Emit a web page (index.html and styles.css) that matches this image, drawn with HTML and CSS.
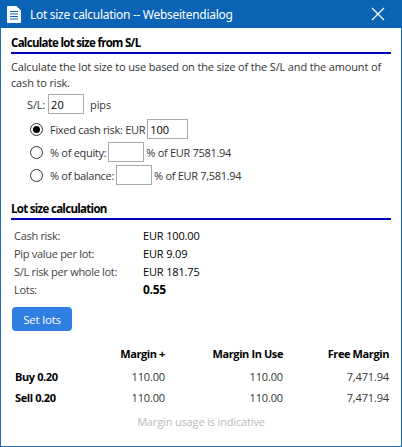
FILE: index.html
```html
<!DOCTYPE html>
<html lang="en">
<head>
  <meta charset="UTF-8">
  <title>Lot size calculation</title>
  <link rel="stylesheet" href="styles.css">
</head>
<body>
  <div class="window">
    <div class="titlebar">
      <svg class="doc-icon" width="14" height="17" viewBox="0 0 14 17">
        <path d="M0.5 0.5 H9.5 L13.5 4.5 V16.5 H0.5 Z" fill="#fff" stroke="#fff"/>
        <path d="M3 5.5 H11 M3 8 H11 M3 10.5 H11 M3 13 H11" stroke="#0b63b6" stroke-width="1"/>
      </svg>
      <span class="title">Lot size calculation -- Webseitendialog</span>
      <svg class="close" width="14" height="14" viewBox="0 0 14 14">
        <path d="M1 1 L13 13 M13 1 L1 13" stroke="#fff" stroke-width="1.2"/>
      </svg>
    </div>

    <div class="content">
      <!-- Calculate from S/L -->
      <h3 class="section-title">Calculate lot size from S/L</h3>
      <p class="intro">Calculate the lot size to use based on the size of the S/L and the amount of cash to risk.</p>

      <div class="sl-row">
        <span>S/L:</span>
        <input type="text" class="sl-input" value="20">
        <span class="pips">pips</span>
      </div>

      <div class="options">
        <label class="option">
          <span class="radio checked"></span>
          <span>Fixed cash risk: EUR</span>
          <input type="text" class="cash-input" value="100">
        </label>
        <label class="option">
          <span class="radio"></span>
          <span>% of equity:</span>
          <input type="text" class="pct-input">
          <span>% of EUR 7581.94</span>
        </label>
        <label class="option">
          <span class="radio"></span>
          <span>% of balance:</span>
          <input type="text" class="pct-input">
          <span>% of EUR 7,581.94</span>
        </label>
      </div>

      <!-- Results -->
      <h3 class="section-title second">Lot size calculation</h3>
      <div class="results">
        <span class="label">Cash risk:</span><span>EUR 100.00</span>
        <span class="label">Pip value per lot:</span><span>EUR 9.09</span>
        <span class="label">S/L risk per whole lot:</span><span>EUR 181.75</span>
        <span class="label">Lots:</span><span class="lots">0.55</span>
      </div>

      <button class="set-lots">Set lots</button>

      <table class="margin-table">
        <tr>
          <th></th>
          <th>Margin +</th>
          <th>Margin In Use</th>
          <th>Free Margin</th>
        </tr>
        <tr>
          <td class="side">Buy 0.20</td>
          <td>110.00</td>
          <td>110.00</td>
          <td>7,471.94</td>
        </tr>
        <tr>
          <td class="side">Sell 0.20</td>
          <td>110.00</td>
          <td>110.00</td>
          <td>7,471.94</td>
        </tr>
      </table>

      <p class="note">Margin usage is indicative</p>
    </div>
  </div>
</body>
</html>
```

FILE: styles.css
```css
body {
  margin: 0;
  font-family: "Open Sans", sans-serif;
  font-size: 11px;
  letter-spacing: -0.15px;
  color: #333;
  background: #fff;
}

.window {
  width: 402px;
  height: 447px;
  box-sizing: border-box;
  border: 1px solid #1a6fbf;
  border-top: none;
  display: flex;
  flex-direction: column;
}

.titlebar {
  height: 28px;
  flex-shrink: 0;
  background-color: #0b63b6;
  margin: 0 -1px;
  display: flex;
  align-items: center;
  padding: 0 17px 0 7px;
  color: #fff;
}

.doc-icon {
  margin-right: 9px;
}

.title {
  flex: 1;
  font-family: "Noto Sans", sans-serif;
  font-size: 12px;
  letter-spacing: -0.3px;
}

.content {
  padding: 0 10px;
}

.section-title {
  margin: 8px 0 0;
  font-size: 11.5px;
  line-height: 14px;
  letter-spacing: -0.7px;
  font-weight: bold;
  color: #000;
  padding-bottom: 2px;
  border-bottom: 2px solid #0000b8;
}

.section-title.second {
  margin-top: 16px;
}

.intro {
  margin: 5px 0 0;
  line-height: 16px;
}

.options label span,
.results .label {
  letter-spacing: -0.3px;
}

input[type="text"] {
  font-family: "Open Sans", sans-serif;
  font-size: 11px;
  color: #000;
  height: 20px;
  box-sizing: border-box;
  border: 1px solid #ababab;
  padding: 0 2px;
  margin: 0 3px;
}

.sl-row {
  display: flex;
  align-items: center;
  margin: 3px 0 0 16px;
}

.sl-input {
  width: 36px;
}

.pips {
  margin-left: 3px;
}

.options {
  margin: 4px 0 0 19px;
  display: flex;
  flex-direction: column;
  gap: 1px;
}

.option {
  display: flex;
  align-items: center;
  height: 22px;
}

.option input {
  margin: 0 2px;
}

.radio {
  width: 11px;
  height: 11px;
  border: 1px solid #333;
  border-radius: 50%;
  margin-right: 7px;
  position: relative;
}

.radio.checked::after {
  content: "";
  position: absolute;
  left: 2px;
  top: 2px;
  width: 7px;
  height: 7px;
  border-radius: 50%;
  background: #000;
}

.cash-input {
  width: 41px;
}

.pct-input {
  width: 36px;
}

.results {
  display: grid;
  grid-template-columns: 129px auto;
  margin: 7px 0 0 3px;
  line-height: 18px;
}

.results .label {
  color: #444;
}

.results span:not(.label) {
  color: #000;
}

.results .lots {
  font-weight: bold;
  font-size: 12px;
  letter-spacing: -0.3px;
}

.set-lots {
  display: block;
  margin-top: 8px;
  margin-left: 1px;
  width: 60px;
  height: 24px;
  padding: 0;
  background-color: #2f7fe2;
  color: #fff;
  border: none;
  border-radius: 4px;
  font-family: "Open Sans", sans-serif;
  font-size: 11.5px;
  letter-spacing: -0.2px;
  cursor: pointer;
}

.margin-table {
  width: 374px;
  margin: 10px 0 0 4px;
  border-collapse: collapse;
}

.margin-table th {
  font-weight: bold;
  color: #000;
  text-align: right;
  height: 25px;
  padding: 0;
  letter-spacing: -0.4px;
}

.margin-table td {
  text-align: right;
  height: 21px;
  padding: 0;
  color: #333;
}

.margin-table th:nth-child(1) {
  width: 70px;
}

.margin-table th:nth-child(2) {
  width: 80px;
}

.margin-table th:nth-child(3) {
  width: 118px;
}

.margin-table .side {
  text-align: left;
  font-weight: bold;
  color: #000;
  letter-spacing: -0.4px;
}

.note {
  text-align: center;
  color: #bbb;
  line-height: 16px;
  margin: 6px 0 0;
}
```
